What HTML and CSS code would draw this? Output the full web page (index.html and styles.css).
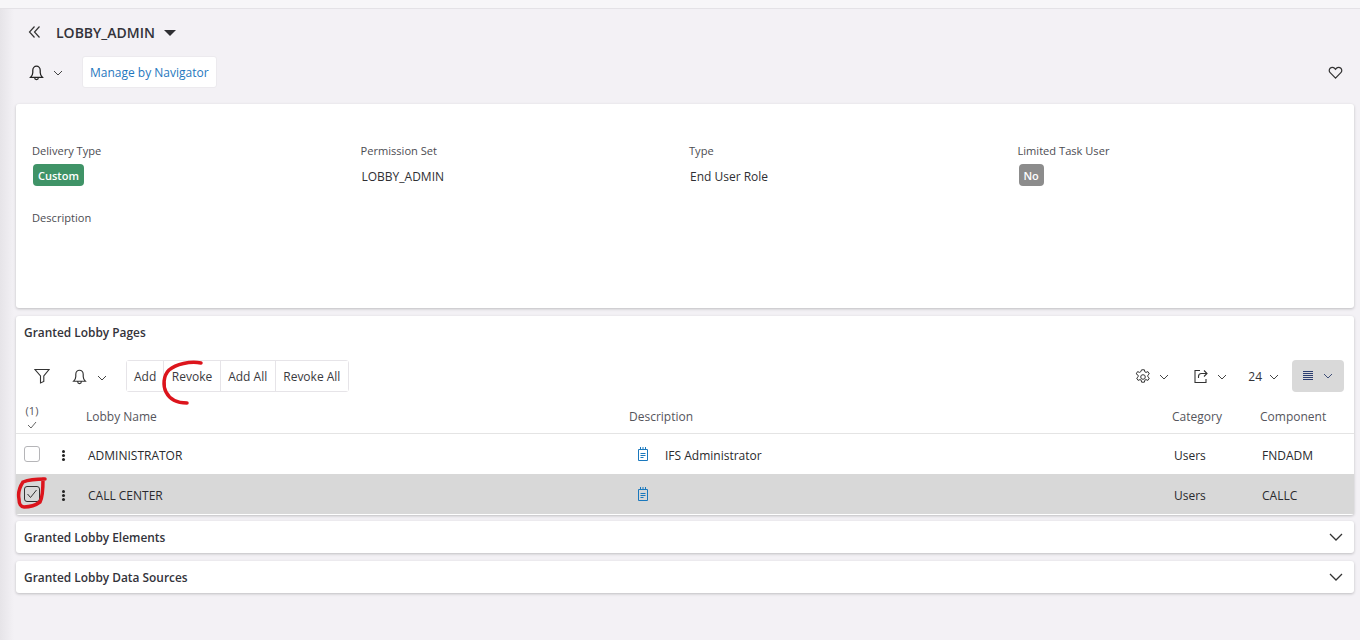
FILE: index.html
```html
<!DOCTYPE html>
<html lang="en">
<head>
<meta charset="utf-8">
<title>LOBBY_ADMIN</title>
<link rel="stylesheet" href="styles.css">
</head>
<body>
<div class="topstrip"></div>
<main class="page">
  <header class="head">
    <svg class="ic-back" width="14" height="14" viewBox="0 0 14 14"><path d="M6.500 1.500 1.500 7l5 5.500M11.500 1.500 6.500 7l5 5.500" fill="none" stroke="#333" stroke-width="1.200"/></svg>
    <h1 class="title">LOBBY_ADMIN</h1>
    <span class="caret"></span>
  </header>
  <div class="cmdbar">
    <div class="cmd-left">
      <svg class="ic-bell" width="17" height="17" viewBox="0 0 16 16"><path d="M2.500 12.500c1.200-1.200 2-2 2-4.500V6a3.500 3.900 0 0 1 7 0v2c0 2.500.8 3.300 2 4.500zM6.300 12.500v.5a1.700 1.700 0 0 0 3.400 0v-.5" fill="none" stroke="#222" stroke-width="1.200"/></svg>
      <svg class="chev chev-bell" width="10" height="6" viewBox="0 0 10 6"><path d="M1 1l4 4 4-4" fill="none" stroke="#444" stroke-width="1"/></svg>
      <button class="manage">Manage by Navigator</button>
    </div>
    <svg class="ic-heart" width="15" height="15" viewBox="0 0 16 16"><path d="M8 14 2.300 8.200a3.300 3.300 0 0 1 0-4.700 3.300 3.300 0 0 1 4.700 0L8 4.600l1-1.100a3.300 3.300 0 0 1 4.700 0 3.300 3.300 0 0 1 0 4.700z" fill="none" stroke="#333" stroke-width="1.300"/></svg>
  </div>

  <section class="card details">
    <div class="fields">
      <div class="field"><div class="lbl">Delivery Type</div><span class="badge badge-green">Custom</span></div>
      <div class="field"><div class="lbl">Permission Set</div><div class="val">LOBBY_ADMIN</div></div>
      <div class="field"><div class="lbl">Type</div><div class="val">End User Role</div></div>
      <div class="field"><div class="lbl">Limited Task User</div><span class="badge badge-grey">No</span></div>
    </div>
    <div class="lbl desc">Description</div>
  </section>

  <section class="card pages">
    <h2 class="card-title">Granted Lobby Pages</h2>
    <div class="toolbar">
      <div class="tb-left">
        <svg class="ic-filter" width="16" height="16" viewBox="0 0 16 16"><path d="M1 1.500h14L9.800 8v5.500l-3.300 1.500V8z" fill="none" stroke="#333" stroke-width="1.100"/></svg>
        <svg class="ic-bell2" width="17" height="17" viewBox="0 0 16 16"><path d="M2.500 12.500c1.200-1.200 2-2 2-4.500V6a3.500 3.900 0 0 1 7 0v2c0 2.500.8 3.300 2 4.500zM6.300 12.500v.5a1.700 1.700 0 0 0 3.400 0v-.5" fill="none" stroke="#333" stroke-width="1.100"/></svg>
        <svg class="chev chev-b2" width="10" height="6" viewBox="0 0 10 6"><path d="M1 1l4 4 4-4" fill="none" stroke="#444" stroke-width="1"/></svg>
        <div class="btngroup">
          <button class="gbtn">Add</button><button class="gbtn">Revoke</button><button class="gbtn">Add All</button><button class="gbtn">Revoke All</button>
        </div>
      </div>
      <div class="tb-right">
        <svg class="ic-gear" width="16" height="16" viewBox="0 0 16 16"><circle cx="8" cy="8" r="2.300" fill="none" stroke="#333" stroke-width="1"/><path d="M6.600.8h2.800l.4 2 1.200.6 1.900-.8 1.400 2.300-1.500 1.400v1.400l1.500 1.400-1.400 2.300-1.900-.8-1.200.6-.4 2H6.600l-.4-2-1.200-.6-1.900.8-1.400-2.300 1.500-1.400V6.300L1.200 4.900l1.400-2.300 1.900.8 1.200-.6z" fill="none" stroke="#333" stroke-width="1" stroke-linejoin="round"/></svg>
        <svg class="chev chev-gear" width="10" height="6" viewBox="0 0 10 6"><path d="M1 1l4 4 4-4" fill="none" stroke="#444" stroke-width="1"/></svg>
        <svg class="ic-export" width="16" height="16" viewBox="0 0 16 16"><path d="M7 2.500H2v12h11V11M5.500 10V8.500a3 3 0 0 1 3-3H14M11 2.500l3 3-3 3" fill="none" stroke="#333" stroke-width="1.100"/></svg>
        <svg class="chev chev-exp" width="10" height="6" viewBox="0 0 10 6"><path d="M1 1l4 4 4-4" fill="none" stroke="#444" stroke-width="1"/></svg>
        <span class="pagesize">24</span>
        <svg class="chev chev-size" width="10" height="6" viewBox="0 0 10 6"><path d="M1 1l4 4 4-4" fill="none" stroke="#444" stroke-width="1"/></svg>
        <div class="density">
          <svg width="12" height="12" viewBox="0 0 12 12"><path d="M1 1.500h10M1 3.500h10M1 5.500h10M1 7.500h10M1 9.500h10" stroke="#2c3e70" stroke-width="1"/></svg>
          <svg class="chev" width="10" height="6" viewBox="0 0 10 6"><path d="M1 1l4 4 4-4" fill="none" stroke="#3f4f78" stroke-width="1"/></svg>
        </div>
      </div>
    </div>
    <div class="grid">
      <div class="row row-head">
        <div class="c-check sel"><span>(1)</span><svg width="10" height="8" viewBox="0 0 10 8"><path d="M1 4l3 3 5-6" fill="none" stroke="#555" stroke-width=".9"/></svg></div>
        <div class="c-menu"></div>
        <div class="c-name">Lobby Name</div>
        <div class="c-desc">Description</div>
        <div class="c-cat">Category</div>
        <div class="c-comp">Component</div>
      </div>
      <div class="row row-body">
        <div class="c-check"><span class="box"></span></div>
        <div class="c-menu"><span class="dots"></span></div>
        <div class="c-name">ADMINISTRATOR</div>
        <div class="c-desc">
          <svg class="ic-note" width="12" height="15" viewBox="0 0 12 15"><path d="M1.500 2.500h9v11h-9zM3.500 0v3M6 0v3M8.500 0v3M3.500 6.500h5M3.500 8.500h5M3.500 10.500h3" fill="none" stroke="#1a78bd" stroke-width="1"/></svg>
          <span>IFS Administrator</span>
        </div>
        <div class="c-cat">Users</div>
        <div class="c-comp">FNDADM</div>
      </div>
      <div class="row row-body row-sel">
        <div class="c-check"><span class="box box-on"><svg width="12" height="10" viewBox="0 0 12 10"><path d="M1.500 5l3 3.500L10.500 1" fill="none" stroke="#333" stroke-width="1"/></svg></span></div>
        <div class="c-menu"><span class="dots"></span></div>
        <div class="c-name">CALL CENTER</div>
        <div class="c-desc">
          <svg class="ic-note" width="12" height="15" viewBox="0 0 12 15"><path d="M1.500 2.500h9v11h-9zM3.500 0v3M6 0v3M8.500 0v3M3.500 6.500h5M3.500 8.500h5M3.500 10.500h3" fill="none" stroke="#1a78bd" stroke-width="1"/></svg>
        </div>
        <div class="c-cat">Users</div>
        <div class="c-comp">CALLC</div>
      </div>
    </div>
  </section>

  <section class="card fold">
    <h2 class="card-title">Granted Lobby Elements</h2>
    <svg width="14" height="8" viewBox="0 0 14 8"><path d="M1 1l6 6 6-6" fill="none" stroke="#333" stroke-width="1.300"/></svg>
  </section>
  <section class="card fold">
    <h2 class="card-title">Granted Lobby Data Sources</h2>
    <svg width="14" height="8" viewBox="0 0 14 8"><path d="M1 1l6 6 6-6" fill="none" stroke="#333" stroke-width="1.300"/></svg>
  </section>
</main>
<svg class="ink ink-revoke" width="44" height="48" viewBox="0 0 44 48"><path d="M41 5C30 3 16 6 9 12 3 18 3 28 6 34c4 8 12 11 21 11" fill="none" stroke="#dc141c" stroke-width="3.500" stroke-linecap="round"/></svg>
<svg class="ink ink-check" width="32" height="34" viewBox="0 0 32 34"><path d="M29 3C20 3 12 4 7 6 3 12 2 18 3 23c0 5 2 8 5 8 5 0 12-2 16-5 3-5 3-15 3-23" fill="none" stroke="#dc141c" stroke-width="3.500" stroke-linecap="round"/></svg>
</body>
</html>
```
FILE: styles.css
```css
* { box-sizing: border-box; }
html, body { margin: 0; height: 640px; overflow: hidden; }
body {
  position: relative;
  background: #f3f1f5;
  font-family: "Open Sans", "Noto Sans", sans-serif;
  font-size: 12px;
  color: #2f2f33;
}
.topstrip { height: 9px; background: #f7f6f8; border-bottom: 1px solid #e4e2e6; }
.page {
  padding: 0 6px 0 16px;
  background: linear-gradient(90deg, #e6e4e8 0, #f3f1f5 14px);
  height: 631px;
}
.head { display: flex; align-items: center; height: 39px; padding: 9px 0 0 12px; }
.ic-back { margin: 0 14px 2px 0; }
.title { margin: 0; font-size: 14px; font-weight: 600; color: #33333a; line-height: 20px; }
.caret { margin: 0 0 1px 9px; border-style: solid; border-width: 6px 6.500px 0; border-color: #2f2f33 transparent transparent; }
.cmdbar { display: flex; align-items: center; justify-content: space-between; height: 32px; margin-top: 8px; padding: 0 11px 0 12px; }
.cmd-left { display: flex; align-items: center; }
.chev { display: block; flex: none; }
.chev-bell { margin: 2px 19px 0 8px; }
.manage {
  height: 32px; padding: 0 7px; border: 1px solid #eceaee; border-radius: 3px; background: #fff;
  font: 12px "Open Sans", sans-serif; color: #1f78be;
}
.card { background: #fff; border-radius: 3px; box-shadow: 0 1px 3px rgba(0,0,0,.22); }
.details { height: 204px; margin-top: 16px; padding: 39px 16px 0; }
.fields { display: grid; grid-template-columns: repeat(4, 328.500px); }
.field { height: 47px; }
.lbl { font-size: 11.100px; line-height: 15px; color: #4c4c52; }
.val { margin: 11px 0 0 1px; font-size: 12px; line-height: 16px; color: #2f2f33; }
.badge { display: inline-block; margin: 6px 0 0 1px; height: 22px; padding: 0 5px; border-radius: 4px; font-size: 11px; font-weight: 600; line-height: 23px; color: #fff; }
.badge-green { background: #3f9367; }
.badge-grey { background: #8c8c8c; }
.desc { margin-top: 20px; }
.pages { height: 199px; margin-top: 8px; }
.card-title { margin: 0; font-size: 11.900px; font-weight: 600; color: #33333a; line-height: 16px; }
.pages > .card-title { padding: 8px 8px 1px; }
.toolbar { display: flex; align-items: center; justify-content: space-between; height: 32px; margin-top: 19px; padding: 0 10px 0 18px; }
.tb-left, .tb-right { display: flex; align-items: center; }
.ic-bell2 { margin-left: 21px; }
.chev-b2 { margin: 3px 0 0 9px; }
.btngroup { display: flex; height: 32px; margin-left: 19px; border: 1px solid #e6e4e8; border-radius: 3px; }
.gbtn { height: 30px; padding: 0 7.500px; border: 0; border-left: 1px solid #e6e4e8; background: #fff; font: 12px "Open Sans", sans-serif; color: #3a3a40; }
.gbtn:first-child { border-left: 0; padding: 0 7px; }
.ic-gear { margin-top: 1px; }
.chev-gear { margin: 1px 0 0 8px; }
.ic-export { margin-left: 24px; }
.chev-exp { margin: 1px 0 0 8px; }
.pagesize { margin-left: 21px; font-size: 12px; color: #33333a; }
.chev-size { margin: 1px 0 0 7px; }
.density { display: flex; align-items: center; gap: 9px; width: 52px; height: 32px; margin-left: 13px; padding-left: 10px; border-radius: 4px; background: #d9d9d9; }
.grid { margin-top: 8px; }
.row { display: flex; align-items: center; }
.row-head { height: 34px; border-bottom: 1px solid #e4e4e4; color: #55555c; }
.row-body { height: 40px; color: #2a2a2e; }
.row-sel { background: #d8d8d8; }
.c-check { width: 32px; padding-left: 8px; flex: none; }
.sel { display: flex; flex-direction: column; align-items: center; gap: 3px; width: 32px; padding: 0; font-size: 11px; line-height: 14px; margin-top: -1px; }
.c-menu { width: 38px; flex: none; padding-left: 14px; }
.c-name { width: 543px; flex: none; }
.row-body .c-name { padding: 2px 0 0 2px; }
.c-desc { display: flex; align-items: center; gap: 16px; width: 543px; flex: none; }
.row-body .c-desc { padding-left: 8px; }
.row-body .c-desc span { padding-top: 2px; }
.c-cat { width: 88px; flex: none; }
.row-body .c-cat { padding: 2px 0 0 2px; }
.c-comp { flex: 1; }
.row-body .c-comp { padding: 2px 0 0 2px; }
.box { display: block; width: 16px; height: 16px; border: 1px solid #b5b5b8; border-radius: 3px; background: #fff; }
.box-on { display: flex; align-items: center; justify-content: center; background: #d8d8d8; border-color: #333; margin-top: -1px; }
.dots { display: block; width: 3px; height: 3px; border-radius: 50%; background: #222; box-shadow: 0 4px 0 #222, 0 8px 0 #222; margin-top: -4px; }
.fold { display: flex; align-items: center; justify-content: space-between; height: 32px; padding: 0 11px 0 8px; }
.pages + .fold { margin-top: 6px; }
.fold + .fold { margin-top: 8px; }
.ink { position: absolute; }
.ink-revoke { left: 160px; top: 358px; }
.ink-check { left: 16px; top: 476px; }
```
